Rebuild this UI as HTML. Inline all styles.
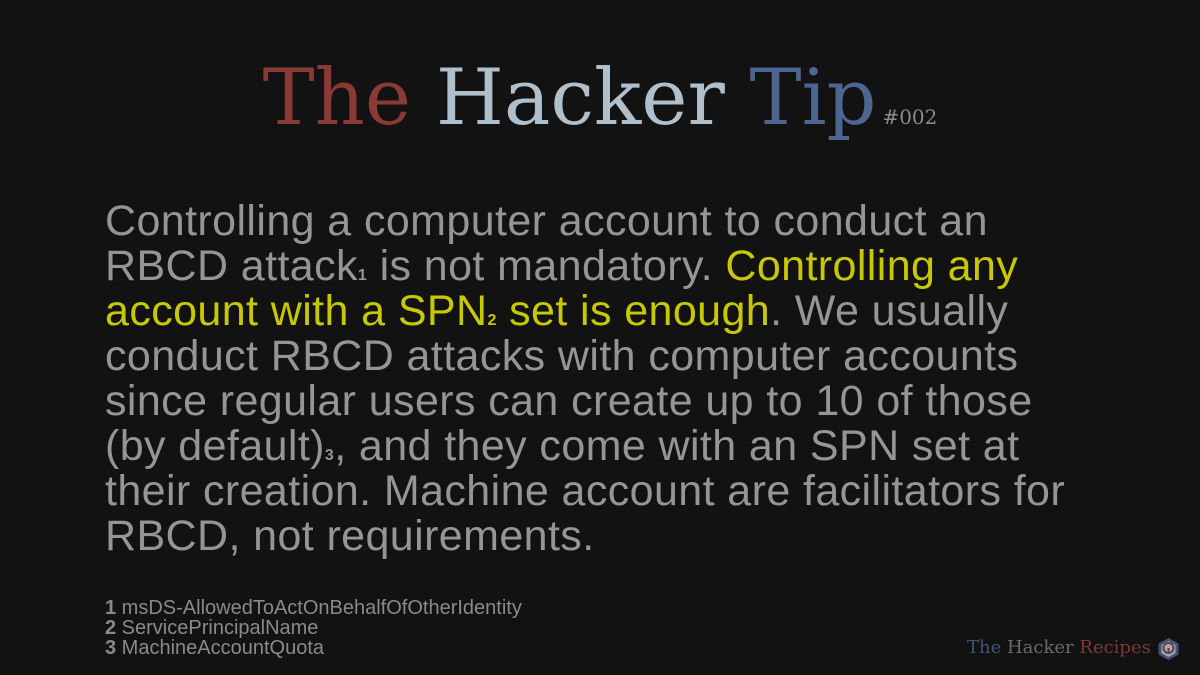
<!DOCTYPE html>
<html><head><meta charset="utf-8"><style>
html,body{margin:0;padding:0;background:#121212;width:1200px;height:675px;overflow:hidden;position:relative}
.title{position:absolute;left:0;width:1200px;top:48px;text-align:center;font-family:"DejaVu Serif",serif;font-size:78px;line-height:100px;white-space:nowrap}
.num{font-size:20px;color:#8a8a8a;margin-left:6px}
.body{position:absolute;left:105px;top:199px;font-family:"Liberation Sans",sans-serif;font-size:43px;letter-spacing:0.4px;line-height:45px;color:#959595;white-space:nowrap}
.y{color:#c8c800}
sub{font-size:16px;vertical-align:baseline;line-height:0;font-weight:bold}
.fn{position:absolute;left:105px;top:598px;font-family:"Liberation Sans",sans-serif;font-size:20px;line-height:20px;color:#8a8a8a;white-space:nowrap}
.brand{position:absolute;left:967px;top:637px;font-family:"DejaVu Serif",serif;font-size:18px;color:#6a6a6a;white-space:nowrap}
</style></head><body>
<div class="title"><span style="color:#8a3a34">The</span> <span style="color:#b0bfcc">Hacker</span> <span style="color:#4d6690">Tip</span><span class="num">#002</span></div>
<div class="body">Controlling a computer account to conduct an<br>RBCD attack<sub>1</sub> is not mandatory. <span class="y">Controlling any</span><br><span class="y">account with a SPN<sub>2</sub> set is enough</span>. We usually<br>conduct RBCD attacks with computer accounts<br>since regular users can create up to 10 of those<br>(by default)<sub>3</sub>, and they come with an SPN set at<br>their creation. Machine account are facilitators for<br>RBCD, not requirements.</div>
<div class="fn"><b>1</b> msDS-AllowedToActOnBehalfOfOtherIdentity<br><b>2</b> ServicePrincipalName<br><b>3</b> MachineAccountQuota</div>
<div class="brand"><span style="color:#3f5478">The</span> Hacker <span style="color:#7a3a34">Recipes</span></div>
<svg style="position:absolute;left:1157px;top:637px" width="23" height="24" viewBox="0 0 23 24">
<polygon points="11.5,1 21.5,6.5 21.5,17.5 11.5,23 1.5,17.5 1.5,6.5" fill="#3f5478"/>
<polygon points="11.5,4 18.5,8 18.5,16 11.5,20 4.5,16 4.5,8" fill="#9aaac0"/>
<circle cx="11.5" cy="11" r="5" fill="none" stroke="#7a3a34" stroke-width="2"/>
<rect x="10.5" y="11" width="2" height="6" fill="#7a3a34"/>
</svg>
</body></html>
